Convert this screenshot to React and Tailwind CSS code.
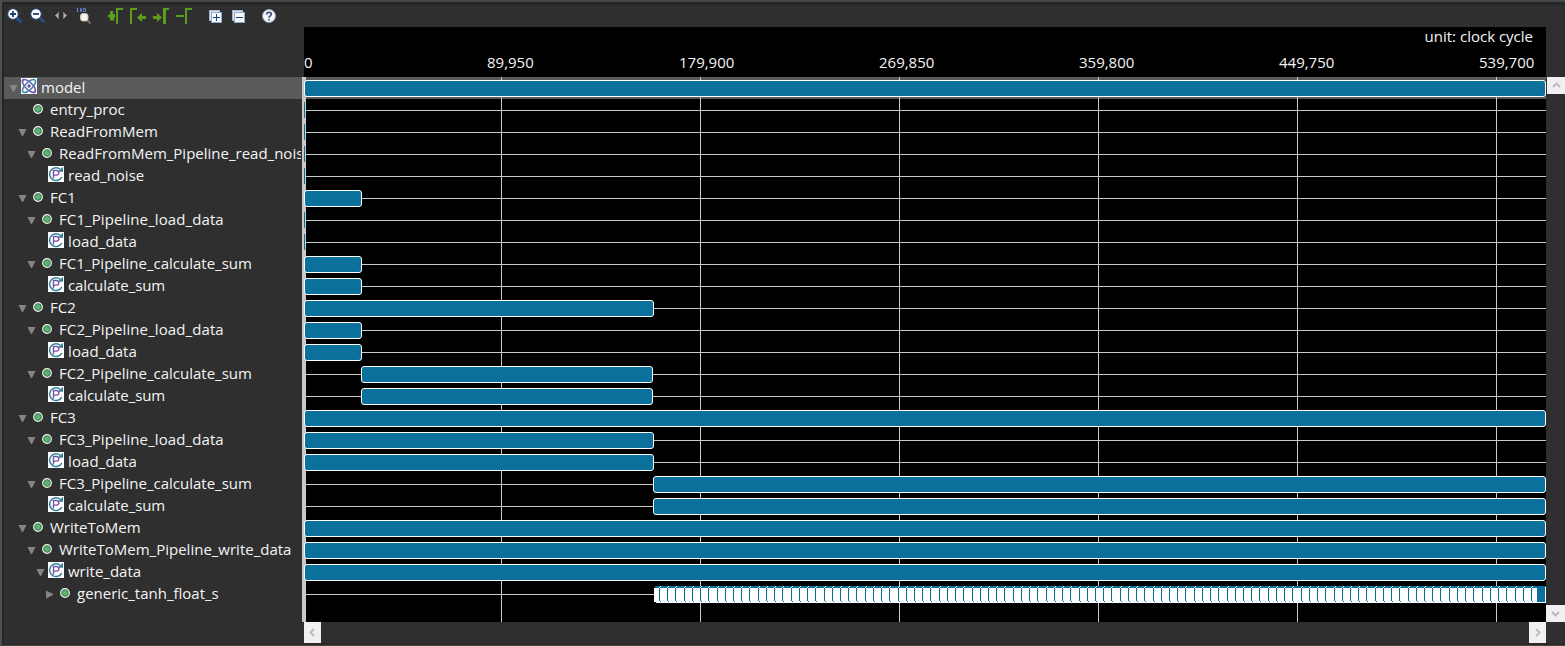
import React from "react";

const BASE = 304;

const rows = [
  { t: "model", depth: 0, icon: "model", tog: "open", bar: [304, 1546] },
  { t: "entry_proc", depth: 1, icon: "dot" },
  { t: "ReadFromMem", depth: 1, icon: "dot", tog: "open" },
  { t: "ReadFromMem_Pipeline_read_noise", depth: 2, icon: "dot", tog: "open" },
  { t: "read_noise", depth: 3, icon: "p" },
  { t: "FC1", depth: 1, icon: "dot", tog: "open", bar: [304, 362] },
  { t: "FC1_Pipeline_load_data", depth: 2, icon: "dot", tog: "open", track: "tracking-[0.1px]" },
  { t: "load_data", depth: 3, icon: "p", track: "tracking-[0.1px]" },
  { t: "FC1_Pipeline_calculate_sum", depth: 2, icon: "dot", tog: "open", bar: [304, 362] },
  { t: "calculate_sum", depth: 3, icon: "p", bar: [304, 362], track: "tracking-[-0.1px]" },
  { t: "FC2", depth: 1, icon: "dot", tog: "open", bar: [304, 654] },
  { t: "FC2_Pipeline_load_data", depth: 2, icon: "dot", tog: "open", bar: [304, 362], track: "tracking-[0.1px]" },
  { t: "load_data", depth: 3, icon: "p", bar: [304, 362], track: "tracking-[0.1px]" },
  { t: "FC2_Pipeline_calculate_sum", depth: 2, icon: "dot", tog: "open", bar: [361, 653] },
  { t: "calculate_sum", depth: 3, icon: "p", bar: [361, 653], track: "tracking-[-0.1px]" },
  { t: "FC3", depth: 1, icon: "dot", tog: "open", bar: [304, 1546] },
  { t: "FC3_Pipeline_load_data", depth: 2, icon: "dot", tog: "open", bar: [304, 654], track: "tracking-[0.1px]" },
  { t: "load_data", depth: 3, icon: "p", bar: [304, 654], track: "tracking-[0.1px]" },
  { t: "FC3_Pipeline_calculate_sum", depth: 2, icon: "dot", tog: "open", bar: [653, 1546] },
  { t: "calculate_sum", depth: 3, icon: "p", bar: [653, 1546], track: "tracking-[-0.1px]" },
  { t: "WriteToMem", depth: 1, icon: "dot", tog: "open", bar: [304, 1546] },
  { t: "WriteToMem_Pipeline_write_data", depth: 2, icon: "dot", tog: "open", bar: [304, 1546] },
  { t: "write_data", depth: 3, icon: "p", tog: "open", bar: [304, 1546] },
  { t: "generic_tanh_float_s", depth: 4, icon: "dot", tog: "closed", stripes: true },
];

const ticks = [
  { x: 304, label: "0" },
  { x: 487, label: "89,950" },
  { x: 679, label: "179,900" },
  { x: 879, label: "269,850" },
  { x: 1079, label: "359,800" },
  { x: 1279, label: "449,750" },
  { x: 1479, label: "539,700" },
];
const gridLines = [501, 700, 899, 1098, 1297, 1496];

function ZoomIcon({ plus }) {
  return (
    <svg width="16" height="16" viewBox="0 0 16 16">
      <path d="M9.5 9.5L14.3 14.3" stroke="#27508c" strokeWidth="2.8" />
      <circle cx="6" cy="6" r="5.2" fill="#fff" stroke="#2a4f8c" strokeWidth=".9" />
      <path d={plus ? "M3 6h6M6 3v6" : "M3 6h6"} stroke="#1c3f73" strokeWidth="1.8" />
    </svg>
  );
}

function FitIcon() {
  return (
    <svg width="14" height="10" viewBox="0 0 14 10">
      <path d="M5 1v7L1 4.5zM9 1v7l4-3.500z" fill="#b5aeb0" />
      <path d="M4.500 1v7M9.500 1v7" stroke="#807b7e" strokeWidth="1" />
    </svg>
  );
}

function RangeZoomIcon() {
  return (
    <svg width="16" height="18" viewBox="0 0 16 18">
      <path d="M.5 0h2M1.500 0v4M.5 3.500h2M4.500.5h1v3h-1zM7.500.5h2v3h-2z" fill="none" stroke="#5b80c4" strokeWidth="1" />
      <path d="M11 12l3.500 3.500" stroke="#8e6a60" strokeWidth="2" />
      <rect x="4.500" y="5.500" width="7.500" height="7.500" rx="2.500" fill="#f2f3f2" stroke="#c8c0a2" strokeWidth="1" />
    </svg>
  );
}

function MarkerIcon({ kind }) {
  return (
    <svg width="18" height="16" viewBox="0 0 18 16" fill="#5c9c1e">
      {kind === "down" && (
        <>
          <path d="M3 11h4v2H3z" fill="#48730f" />
          <path d="M9 0h7v2h-5v14H9zM3 3h3v3h2v4H7v2H3v-2L0 8l3-2z" />
        </>
      )}
      {kind === "left" && <path d="M0 0h7v2H2v14H0zM7 9.500l5-4.500v3h4v3h-4v3z" />}
      {kind === "right" && <path d="M10 0h6v2h-3v14h-3zM0 8h4V5l5 4.500L4 14v-3H0z" />}
      {kind === "minus" && <path d="M9 0h7v2h-5v14H9zM0 7h8v2H0z" />}
    </svg>
  );
}

function TreeBoxIcon({ plus }) {
  return (
    <svg width="13" height="13" viewBox="0 0 13 13">
      <rect x=".5" y=".5" width="10" height="10" fill="#dce8f2" stroke="#a3b5cc" />
      <rect x="2.500" y="2.500" width="10" height="10" fill="#f5fafd" stroke="#8fa9c7" />
      <path d={plus ? "M4 7.500h7M7.500 4v7" : "M4 7.500h7"} stroke="#15437c" />
    </svg>
  );
}

function HelpIcon() {
  return (
    <svg width="14" height="14" viewBox="0 0 14 14">
      <circle cx="7" cy="7" r="6.500" fill="#f5f7fa" stroke="#8b9fba" />
      <path d="M4.700 5.500C4.700 2.500 9.500 2.600 9.300 5.300 9.200 6.800 7 7 7 8.800M7 10v1.600" fill="none" stroke="#364f78" strokeWidth="1.700" />
    </svg>
  );
}

function ModelIcon() {
  return (
    <svg width="16" height="16" viewBox="0 0 16 16">
      <rect width="16" height="16" fill="#fff" />
      <g fill="none" strokeWidth="1.600">
        <ellipse cx="8" cy="8" rx="8.500" ry="3.600" transform="rotate(45 8 8)" stroke="#7d55b5" />
        <ellipse cx="8" cy="8" rx="8.500" ry="3.600" transform="rotate(-45 8 8)" stroke="#3a86a8" />
      </g>
      <path d="M1 3.500L3 1M12.500 15l2-2" stroke="#7d55b5" strokeWidth="1.800" />
      <circle cx="8" cy="8" r="1.700" fill="#5f4fa5" />
    </svg>
  );
}

function PipelineIcon() {
  return (
    <svg width="16" height="16" viewBox="0 0 16 16">
      <rect width="16" height="16" fill="#fff" />
      <path d="M12.300 3.400A6.400 6.400 0 1 0 13.800 11" fill="none" stroke="#2f8296" strokeWidth="1.500" />
      <path d="M15 .8v5h-5z" fill="#2f8296" />
      <path d="M5.500 12.500V4.500h3a2.300 2.300 0 0 1 0 4.600h-3" fill="none" stroke="#7a51ad" strokeWidth="1.400" />
    </svg>
  );
}

function DotIcon() {
  return (
    <svg width="10" height="10" viewBox="0 0 10 10">
      <circle cx="5" cy="5" r="4.300" fill="#62b074" stroke="#f1f7f0" strokeWidth="1.200" />
      <circle cx="5" cy="5" r="3.200" fill="none" stroke="#2f7a4c" strokeWidth=".8" />
    </svg>
  );
}

function Toggle({ state }) {
  return (
    <svg width="9" height="9" viewBox="0 0 9 9" className="block">
      {state === "open" && <path d="M.5 1h8L5 8H4z" fill="#858585" />}
      {state === "closed" && <path d="M1 .5v8L8 5V4z" fill="#858585" />}
    </svg>
  );
}

function TreeRow({ row, first }) {
  return (
    <div className={"flex h-[22px] shrink-0 items-start " + (first ? "bg-[#5a5a5a]" : "pr-px")}>
      <div className="shrink-0" style={{ width: 5 + row.depth * 9 }} />
      <div className="mt-[7px] w-[9px] shrink-0"><Toggle state={row.tog} /></div>
      {row.icon === "dot" ? (
        <div className="mt-[5px] mr-[7px] ml-[6px] w-[10px] shrink-0"><DotIcon /></div>
      ) : (
        <div className="mt-px mr-1 ml-[3px] w-4 shrink-0">
          {row.icon === "model" ? <ModelIcon /> : <PipelineIcon />}
        </div>
      )}
      <span className={"-mt-px min-w-0 overflow-hidden whitespace-nowrap text-[15px] leading-[22px] text-[#f4f4f4] " + (row.track || "")}>
        {row.t}
      </span>
    </div>
  );
}

function Stripes() {
  const seps = Array.from({ length: 107 }, (_, i) => 5 + Math.round(i * 8.226));
  return (
    <svg className="block" width="892" height="17" viewBox="0 0 892 17" shapeRendering="crispEdges">
      <rect x="1" width="891" height="17" fill="#0b709b" />
      <rect y="2" width="883" height="15" fill="#fff" />
      <rect y="16" width="2" height="1" fill="#000" />
      {seps.map((x) => (
        <g key={x}>
          <rect x={x} y="2" width="1" height="13" fill="#0b709b" />
          <rect x={x} y="1" width="1" height="1" fill="#fff" />
          <rect x={x + 1} y="0" width="1" height="1" fill="#fff" />
          <rect x={x + 1} y="15" width="1" height="1" fill="#0b709b" />
        </g>
      ))}
      <rect x="883" y="2" width="9" height="14" fill="#0b709b" />
      <rect x="883" y="16" width="9" height="1" fill="#fff" />
      <rect x="891" y="1" width="1" height="15" fill="#fff" />
    </svg>
  );
}

function ChartRow({ row, first }) {
  const [start, end] = row.bar || [654, 1546];
  return (
    <div className="relative flex h-[22px] shrink-0 items-start pt-[3px]">
      {!first && <div className="absolute top-[11px] right-0 left-0 h-px bg-[#c8c8c8]" />}
      {row.bar && (
        <div
          className="relative h-[17px] rounded-[3px] border border-white bg-[#0b709b]"
          style={{ marginLeft: start - BASE, width: end - start }}
        />
      )}
      {row.stripes && <div className="relative ml-[350px]"><Stripes /></div>}
      {!row.bar && !row.stripes && <div className="relative z-20 h-4 w-px bg-[#0b709b]" />}
    </div>
  );
}

function ScrollButton({ d, className }) {
  return (
    <div className={"flex items-center justify-center bg-[#f0f0f0] " + className}>
      <svg width="9" height="9" viewBox="0 0 9 9" fill="none" stroke="#bcbcbc" strokeWidth="2"><path d={d} /></svg>
    </div>
  );
}

export default function App() {
  return (
    <div className="relative flex h-[646px] w-[1565px] flex-col overflow-hidden border-t-2 border-b border-l-2 border-t-[#464849] border-b-[#474345] border-l-[#4b5052] bg-[#262626] pt-[3px] pl-[2px] font-['Open_Sans',sans-serif]">
      <div className="absolute -top-[2px] left-[1160px] h-[2px] w-[148px] bg-[#282828]" />
      <div className="flex min-h-0 flex-1 bg-[#2f2f2f]">
        <div className="flex w-[298px] shrink-0 flex-col">
          <div className="flex h-[72px] shrink-0 items-start pt-[3px] pl-[3px]">
            <div className="w-[23px]"><ZoomIcon plus /></div>
            <div className="w-6"><ZoomIcon /></div>
            <div className="mt-[3px] w-[22px]"><FitIcon /></div>
            <div className="w-[31px]"><RangeZoomIcon /></div>
            <div className="w-[23px]"><MarkerIcon kind="down" /></div>
            <div className="w-[23px]"><MarkerIcon kind="left" /></div>
            <div className="w-[23px]"><MarkerIcon kind="right" /></div>
            <div className="w-[33px]"><MarkerIcon kind="minus" /></div>
            <div className="mt-[2px] w-[23px]"><TreeBoxIcon plus /></div>
            <div className="mt-[2px] w-[30px]"><TreeBoxIcon /></div>
            <div className="mt-px"><HelpIcon /></div>
          </div>
          <div className="flex flex-col">
            {rows.map((r, i) => <TreeRow key={i} row={r} first={i === 0} />)}
          </div>
        </div>

        <div className="flex w-1 shrink-0 flex-col pt-[72px]">
          <div className="h-[545px] bg-[#c8c8c8]" />
        </div>

        <div className="-ml-[2px] flex w-[1242px] shrink-0 flex-col pt-[22px]">
          <div className="relative z-10 h-[50px] shrink-0 bg-black text-[15px] leading-5 text-[#f4f4f4]">
            <div className="-mt-px flex justify-end bg-black pr-[13px] [clip-path:inset(1px_0_0_0)]"><span>unit: clock cycle</span></div>
            <div className="relative h-5">
              {ticks.map((t) => (
                <span key={t.label} className="absolute top-[6px]" style={{ left: t.x - BASE }}>{t.label}</span>
              ))}
            </div>
          </div>
          <div className="relative h-[545px] shrink-0">
            <div className="absolute inset-y-0 right-0 left-[2px] bg-black" />
            <div className="absolute top-0 right-0 left-[2px] h-[22px] bg-[#5a5a5a]" />
            {gridLines.map((x) => (
              <div key={x} className="absolute inset-y-0 w-px bg-[#c8c8c8]" style={{ left: x - BASE }} />
            ))}
            <div className="relative flex flex-col">
              {rows.map((r, i) => <ChartRow key={i} row={r} first={i === 0} />)}
            </div>
          </div>
          <div className="flex h-[21px] shrink-0 justify-between">
            <ScrollButton className="w-[17px]" d="M6 1L2.500 4.500L6 8" />
            <ScrollButton className="w-[17px]" d="M3 1L6.500 4.500L3 8" />
          </div>
        </div>

        <div className="flex flex-1 flex-col pt-[72px]">
          <ScrollButton className="ml-px h-[17px]" d="M1 6L4.500 2.500L8 6" />
          <div className="h-[511px]" />
          <ScrollButton className="h-[17px]" d="M1 3L4.500 6.500L8 3" />
        </div>
      </div>
      <div className="h-[2px] shrink-0 bg-[#2a2a2a]" />
    </div>
  );
}
